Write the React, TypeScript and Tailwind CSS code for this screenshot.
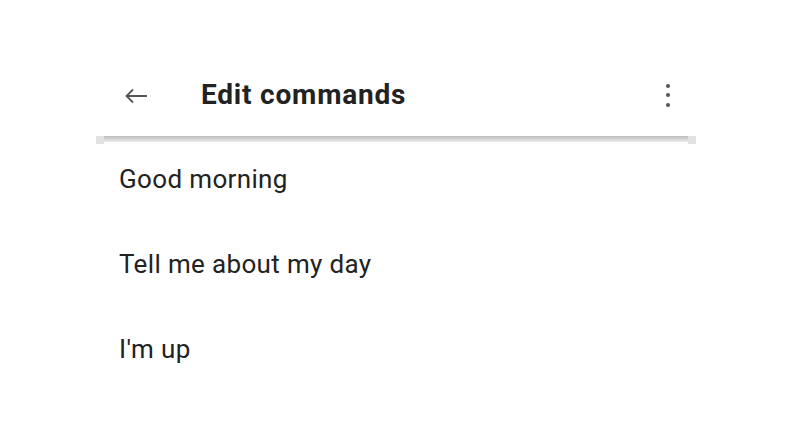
import React from "react";

export default function App() {
  return (
    <div className="w-[792px] h-[446px] bg-white relative overflow-hidden" style={{ fontFamily: "Roboto, 'Liberation Sans', sans-serif" }}>
      <div className="pt-[64px] px-[96px]">
        <div className="flex items-center h-[64px]">
          <div className="w-[105px] pl-[28px] flex items-center">
            <svg width="24" height="24" viewBox="0 0 24 24" fill="none">
              <path d="M23 12H2M9 5.5L2.5 12 9 18.5" stroke="#555" strokeWidth="1.8" />
            </svg>
          </div>
          <div className="flex-1 text-[28px] font-bold text-[#222] tracking-[0.8px] -mt-[2px]">Edit commands</div>
          <div className="w-[40px] flex flex-col items-center gap-[5.5px] mr-[8px] -mt-[2px]">
            <div className="w-[4px] h-[4px] rounded-full bg-[#555]" />
            <div className="w-[4px] h-[4px] rounded-full bg-[#555]" />
            <div className="w-[4px] h-[4px] rounded-full bg-[#555]" />
          </div>
        </div>
        <div className="flex h-[8px] mt-[8px]">
          <div className="w-[8px] bg-[#e2e2e2]" />
          <div className="flex-1 h-[6px] bg-gradient-to-b from-[#bdbdbd] to-[#ececec]" />
          <div className="w-[8px] bg-[#e2e2e2]" />
        </div>
        <div className="pl-[23px] text-[26px] text-[#222] tracking-[0.35px]">
          <div className="h-[85px] pt-[16px]">Good morning</div>
          <div className="h-[85px] pt-[16px]">Tell me about my day</div>
          <div className="h-[85px] pt-[16px]">I'm up</div>
        </div>
      </div>
    </div>
  );
}
